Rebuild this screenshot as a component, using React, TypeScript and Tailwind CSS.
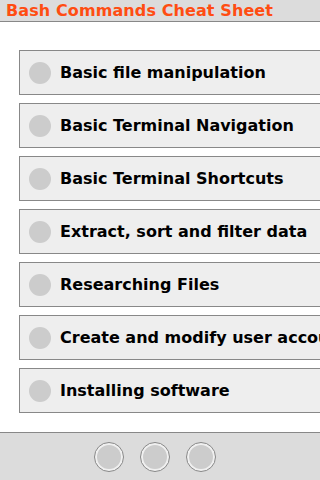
import React from "react";

const items = [
  "Basic file manipulation",
  "Basic Terminal Navigation",
  "Basic Terminal Shortcuts",
  "Extract, sort and filter data",
  "Researching Files",
  "Create and modify user accounts",
  "Installing software",
];

export default function App() {
  return (
    <div
      className="w-[320px] h-[480px] flex flex-col bg-white overflow-hidden"
      style={{ fontFamily: '"DejaVu Sans", sans-serif' }}
    >
      <div className="h-[22px] shrink-0 bg-[#dcdcdc] border-b border-[#888888] flex items-center pl-[6px]">
        <span className="text-[16px] tracking-[0.1px] font-bold leading-none text-[#ff4d12] whitespace-nowrap">
          Bash Commands Cheat Sheet
        </span>
      </div>
      <div className="flex-1 flex flex-col gap-[8px] pt-[28px] pl-[19px] overflow-hidden">
        {items.map((t) => (
          <div
            key={t}
            className="h-[45px] w-[360px] shrink-0 bg-[#eeeeee] border border-[#888888] flex items-center pl-[9px] gap-[9px]"
          >
            <div className="w-[22px] h-[22px] rounded-full bg-[#cccccc] shrink-0" />
            <span className="text-[16px] font-bold text-black whitespace-nowrap">{t}</span>
          </div>
        ))}
      </div>
      <div className="h-[48px] shrink-0 bg-[#dcdcdc] border-t border-[#888888] flex items-center justify-center gap-[16px] pr-[11px]">
        {[0, 1, 2].map((i) => (
          <div
            key={i}
            className="w-[30px] h-[30px] rounded-full border border-[#888888] bg-[#f0f0f0] flex items-center justify-center"
          >
            <div className="w-[24px] h-[24px] rounded-full bg-[#cccccc]" />
          </div>
        ))}
      </div>
    </div>
  );
}
